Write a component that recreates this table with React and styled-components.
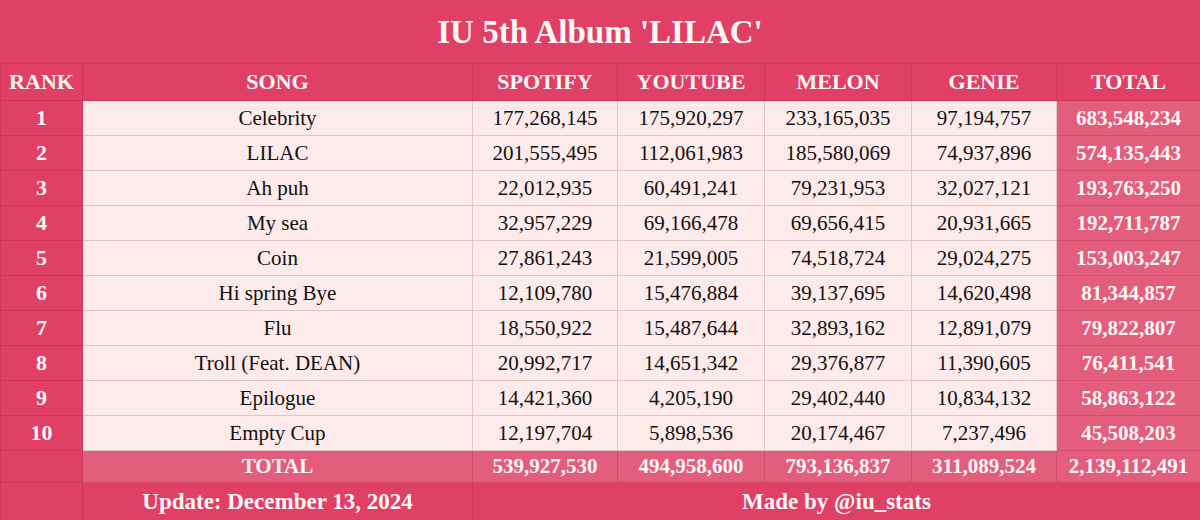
import React from "react";
import styled, { createGlobalStyle } from "styled-components";

const GlobalStyle = createGlobalStyle`
  html, body {
    margin: 0;
    padding: 0;
    background: #e03f66;
  }
`;

const Page = styled.div`
  width: 1200px;
  height: 520px;
  background: #e03f66;
  font-family: "Liberation Serif", "Times New Roman", serif;
  overflow: hidden;
`;

const Title = styled.h1`
  margin: 0;
  height: 63px;
  display: flex;
  align-items: center;
  justify-content: center;
  color: #fff6f6;
  font-size: 33px;
  font-weight: 700;
  padding-top: 2px;
  box-sizing: border-box;
`;

const Table = styled.table`
  width: 1200px;
  table-layout: fixed;
  border-collapse: collapse;
`;

const Head = styled.th`
  height: 36px;
  padding: 0;
  color: #fff6f6;
  font-size: 22px;
  font-weight: 700;
  text-align: center;
  border: 1px solid #cc355b;
  border-top: 1px solid #d33a60;
`;

const Cell = styled.td`
  height: ${(p) => p.$h || 35}px;
  padding: 0;
  text-align: center;
  font-size: ${(p) => p.$size || 21}px;
  box-sizing: border-box;
  ${(p) =>
    p.$kind === "rank"
      ? `background: #e03f66; color: #fff6f6; font-weight: 700; border: 1px solid #cc355b;`
      : p.$kind === "sum"
      ? `background: #e35e7d; color: #fff6f6; font-weight: 700; border: 1px solid #d44a6c;`
      : p.$kind === "foot"
      ? `background: #e03f66; color: #fff6f6; font-weight: 700; border: 1px solid #cc355b;`
      : `background: #fdeaea; color: #111; border: 1px solid #dcc6c8;`}
`;

const cols = [82, 390, 145, 147, 147, 145, 144];

const rows = [
  ["Celebrity", "177,268,145", "175,920,297", "233,165,035", "97,194,757", "683,548,234"],
  ["LILAC", "201,555,495", "112,061,983", "185,580,069", "74,937,896", "574,135,443"],
  ["Ah puh", "22,012,935", "60,491,241", "79,231,953", "32,027,121", "193,763,250"],
  ["My sea", "32,957,229", "69,166,478", "69,656,415", "20,931,665", "192,711,787"],
  ["Coin", "27,861,243", "21,599,005", "74,518,724", "29,024,275", "153,003,247"],
  ["Hi spring Bye", "12,109,780", "15,476,884", "39,137,695", "14,620,498", "81,344,857"],
  ["Flu", "18,550,922", "15,487,644", "32,893,162", "12,891,079", "79,822,807"],
  ["Troll (Feat. DEAN)", "20,992,717", "14,651,342", "29,376,877", "11,390,605", "76,411,541"],
  ["Epilogue", "14,421,360", "4,205,190", "29,402,440", "10,834,132", "58,863,122"],
  ["Empty Cup", "12,197,704", "5,898,536", "20,174,467", "7,237,496", "45,508,203"],
];

const totals = ["539,927,530", "494,958,600", "793,136,837", "311,089,524", "2,139,112,491"];

export default function App() {
  return (
    <Page>
      <GlobalStyle />
      <Title>IU 5th Album 'LILAC'</Title>
      <Table>
        <colgroup>
          {cols.map((w, i) => (
            <col key={i} style={{ width: w }} />
          ))}
        </colgroup>
        <thead>
          <tr>
            {["RANK", "SONG", "SPOTIFY", "YOUTUBE", "MELON", "GENIE", "TOTAL"].map((h) => (
              <Head key={h}>{h}</Head>
            ))}
          </tr>
        </thead>
        <tbody>
          {rows.map((r, i) => (
            <tr key={i}>
              <Cell $kind="rank" $size={22}>{i + 1}</Cell>
              {r.slice(0, 5).map((v, j) => (
                <Cell key={j}>{v}</Cell>
              ))}
              <Cell $kind="sum">{r[5]}</Cell>
            </tr>
          ))}
          <tr>
            <Cell $kind="rank" $h={32} />
            <Cell $kind="sum" $h={32}>TOTAL</Cell>
            {totals.map((t) => (
              <Cell key={t} $kind="sum" $h={32}>
                {t}
              </Cell>
            ))}
          </tr>
          <tr>
            <Cell $kind="foot" $h={39} $size={23} />
            <Cell $kind="foot" $h={39} $size={23}>Update: December 13, 2024</Cell>
            <Cell $kind="foot" $h={39} $size={23} colSpan={5}>
              Made by @iu_stats
            </Cell>
          </tr>
        </tbody>
      </Table>
    </Page>
  );
}
